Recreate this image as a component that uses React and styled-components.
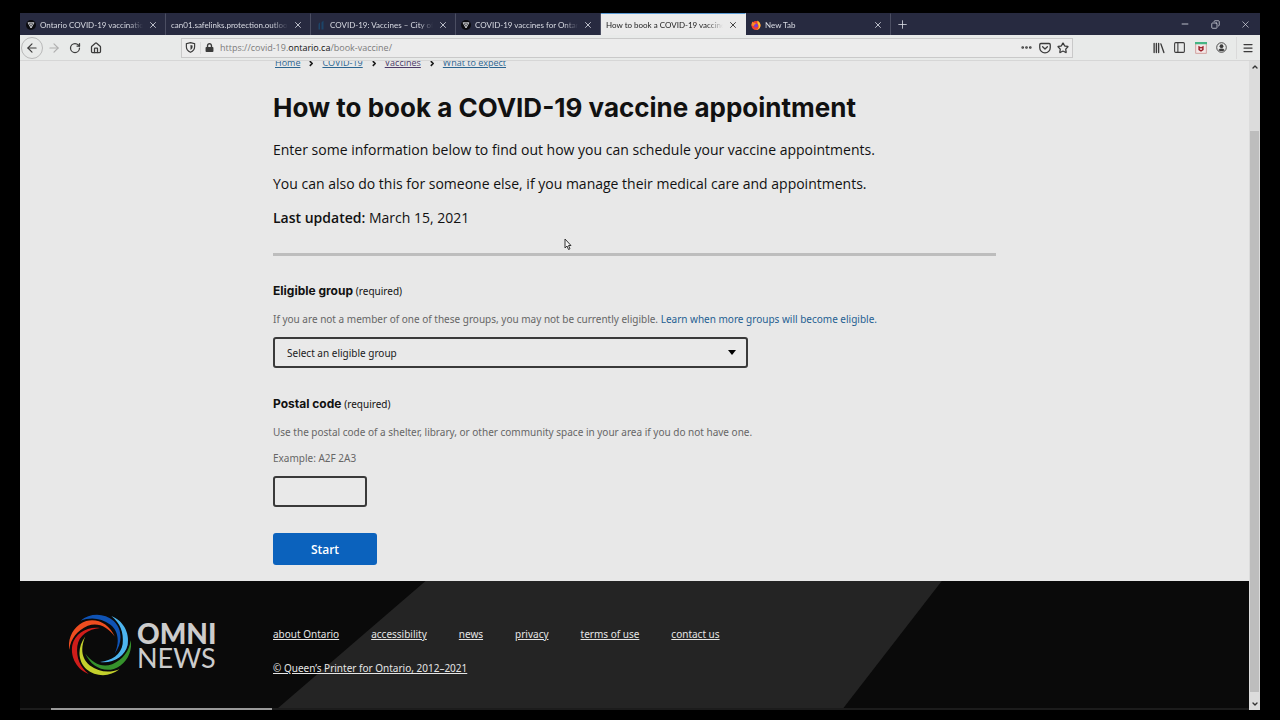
import React from 'react'
import styled, { createGlobalStyle, css } from 'styled-components'
import {
  ArrowLeft,
  ArrowRight,
  RotateCw,
  House,
  Ellipsis,
  Star,
  PanelLeft,
  Menu,
  Minus,
  Plus,
  X,
  Copy,
  ChevronUp,
  ChevronDown,
} from 'lucide-react'
import { FaLock } from 'react-icons/fa'

const tabs = [
  { title: 'Ontario COVID-19 vaccination', icon: 'trillium' },
  { title: 'can01.safelinks.protection.outlook.com' },
  { title: 'COVID-19: Vaccines – City of Toronto', icon: 'toronto' },
  { title: 'COVID-19 vaccines for Ontario', icon: 'trillium' },
  { title: 'How to book a COVID-19 vaccine appointment', active: true },
  { title: 'New Tab', icon: 'firefox' },
]

const crumbs = ['Home', 'COVID-19', 'Vaccines', 'What to expect']

const footerLinks = ['about Ontario', 'accessibility', 'news', 'privacy', 'terms of use', 'contact us']

const swirl = [
  { color: '#4db4ee', angle: 0 },
  { color: '#35912c', angle: 60 },
  { color: '#c3d02c', angle: 120 },
  { color: '#cf1d1a', angle: 180 },
  { color: '#ee4d20', angle: 240 },
  { color: '#0f53b5', angle: 300 },
]

const TabIcon = ({ name }) => {
  if (name === 'trillium') {
    return (
      <Favicon viewBox="0 0 20 20" aria-hidden="true">
        <circle cx="10" cy="10" r="10" fill="#0b0b0f" />
        <path d="M4 5.500h12L10 16z M7 5.500l3 4.500 3-4.500 M10 10v5" fill="none" stroke="#e4e6ea" strokeWidth="1.600" />
      </Favicon>
    )
  }
  if (name === 'toronto') {
    return (
      <Favicon viewBox="0 0 20 20" aria-hidden="true">
        <path d="M5 19V9q0-3 3-4v14z M11 19V5l4-4v18z" fill="#1d4468" />
      </Favicon>
    )
  }
  return (
    <Favicon viewBox="0 0 20 20" aria-hidden="true">
      <circle cx="10" cy="11" r="9" fill="#f2412f" />
      <path d="M13 1c4 3 6.500 6 6 11-1 5-5 8-9 8 5-1 6-5 5-9-1-3-3-5-2-10z" fill="#fdc22d" />
      <circle cx="10" cy="11" r="4" fill="#7b3fd4" />
      <path d="M1 11c0-4 1-6 2-8l2 3c2-1 4 0 5 2-3 0-4 2-4 4z" fill="#fb8a26" />
    </Favicon>
  )
}

const ShieldIcon = () => (
  <svg width="11" height="11" viewBox="0 0 16 16" fill="none" stroke="currentColor" strokeWidth="1.700" aria-hidden="true">
    <path d="M8 1L14 2.500V7c0 4-2.500 6.500-6 8-3.500-1.500-6-4-6-8V2.500z" />
    <path d="M8 4.500v7c2-1 3-2.500 3-5V5z" fill="currentColor" stroke="none" />
  </svg>
)

const PocketIcon = () => (
  <svg width="12" height="12" viewBox="0 0 16 16" fill="none" stroke="currentColor" strokeWidth="1.700" strokeLinecap="round" strokeLinejoin="round" aria-hidden="true">
    <path d="M2.500 2h11a1.500 1.500 0 0 1 1.500 1.500V7.500a7 7 0 0 1-14 0V3.500A1.500 1.500 0 0 1 2.500 2z" />
    <path d="M4.800 6.300L8 9.400l3.200-3.100" />
  </svg>
)

const LibraryIcon = () => (
  <svg width="12" height="12" viewBox="0 0 16 16" fill="none" stroke="currentColor" strokeWidth="1.800" strokeLinecap="round" aria-hidden="true">
    <path d="M1.500 2v12 M4.500 2v12 M7.500 2v12 M10.500 2.500l4 11.500" />
  </svg>
)

const ExtensionIcon = () => (
  <svg width="12" height="12" viewBox="0 0 16 16" aria-hidden="true">
    <rect x="1" y="1" width="14" height="14" fill="#f3e9e8" stroke="#c98a86" />
    <rect width="16" height="3" fill="#45b584" />
    <path d="M4.500 5l3.500 2 3.500-2v5.500L8 13l-3.500-2.500z" fill="#9c1e28" />
    <path d="M6.500 8l1.500 1 1.500-1v1.500l-1.500 1-1.500-1z" fill="#fff" />
  </svg>
)

const AccountIcon = () => (
  <svg width="11" height="11" viewBox="0 0 16 16" fill="none" stroke="currentColor" strokeWidth="1.300" aria-hidden="true">
    <circle cx="8" cy="8" r="7" />
    <circle cx="8" cy="6" r="2.800" fill="currentColor" stroke="none" />
    <path d="M3.500 11.500q1.500-2 4.500-2t4.500 2q-1.500 2-4.500 2t-4.500-2z" fill="currentColor" stroke="none" />
  </svg>
)

const BrowserTabs = () => (
  <TabStrip>
    {tabs.map((tab) => (
      <Tab key={tab.title} $active={tab.active}>
        {tab.icon && <TabIcon name={tab.icon} />}
        <TabTitle>{tab.title}</TabTitle>
        <TabClose aria-label={`Close ${tab.title}`}><X size={10} /></TabClose>
      </Tab>
    ))}
    <NewTab aria-label="New tab"><Plus size={13} strokeWidth={1.5} /></NewTab>
    <WindowControls>
      <WindowButton aria-label="Minimize"><Minus size={10} /></WindowButton>
      <WindowButton aria-label="Restore"><RestoreIcon size={9} /></WindowButton>
      <WindowButton aria-label="Close window"><X size={11} strokeWidth={1.5} /></WindowButton>
    </WindowControls>
  </TabStrip>
)

const Toolbar = () => (
  <Bar>
    <BackButton aria-label="Back"><ArrowLeft size={14} /></BackButton>
    <ToolButton aria-label="Forward" $faded><ArrowRight size={14} /></ToolButton>
    <ToolButton aria-label="Reload"><RotateCw size={12} strokeWidth={2.5} /></ToolButton>
    <ToolButton aria-label="Home"><House size={12} strokeWidth={2.5} /></ToolButton>
    <AddressBar>
      <SiteInfo>
        <ShieldIcon />
        <Divider />
        <FaLock size={9} />
      </SiteInfo>
      <Address>https://covid-19.<b>ontario.ca</b>/book-vaccine/</Address>
      <Ellipsis size={13} strokeWidth={3} />
      <PocketIcon />
      <Star size={12} strokeWidth={2.5} />
    </AddressBar>
    <ToolButton aria-label="Library"><LibraryIcon /></ToolButton>
    <ToolButton aria-label="Sidebars"><PanelLeft size={13} /></ToolButton>
    <ToolButton aria-label="Extension"><ExtensionIcon /></ToolButton>
    <ToolButton aria-label="Account"><AccountIcon /></ToolButton>
    <MenuButton aria-label="Menu"><Menu size={12} strokeWidth={2.5} /></MenuButton>
  </Bar>
)

const BookingForm = () => (
  <Form onSubmit={(e) => e.preventDefault()}>
    <Field>
      <Label htmlFor="group">Eligible group <Required>(required)</Required></Label>
      <Hint>
        If you are not a member of one of these groups, you may not be currently eligible.{' '}
        <HintLink href="#eligible">Learn when more groups will become eligible.</HintLink>
      </Hint>
      <SelectWrap>
        <Select id="group" defaultValue="">
          <option value="">Select an eligible group</option>
        </Select>
        <Caret viewBox="0 0 8 5" aria-hidden="true"><path d="M0 0h8L4 5z" /></Caret>
      </SelectWrap>
    </Field>
    <Field>
      <Label htmlFor="postal">Postal code <Required>(required)</Required></Label>
      <Hint>Use the postal code of a shelter, library, or other community space in your area if you do not have one.</Hint>
      <Hint>Example: A2F 2A3</Hint>
      <PostalInput id="postal" type="text" />
    </Field>
    <StartButton type="submit">Start</StartButton>
  </Form>
)

const OmniLogo = () => (
  <Bug>
    <svg width="62" height="62" viewBox="-93 -93 186 186" aria-hidden="true">
      {swirl.map(({ color, angle }) => (
        <path
          key={color}
          transform={`rotate(${angle})`}
          fill={color}
          d="M34-87C68-74 90-38 83 0C75 34 40 56 0 51C36 47 63 29 68-3C72-38 60-66 34-87Z"
        />
      ))}
    </svg>
    <BugText>
      <BugTop>OMNI</BugTop>
      <BugBottom>NEWS</BugBottom>
    </BugText>
  </Bug>
)

const App = () => {
  return (
    <Screen>
      <GlobalStyle />
      <BrowserTabs />
      <Toolbar />
      <Viewport>
        <Page>
          <Main>
            <Crumbs aria-label="Breadcrumb">
              {crumbs.map((crumb, i) => (
                <React.Fragment key={crumb}>
                  {i > 0 && <CrumbArrow viewBox="0 0 5 8" aria-hidden="true"><path d="M1 1l3 3-3 3" /></CrumbArrow>}
                  <Crumb href="#crumb" $visited={crumb === 'Vaccines'}>{crumb}</Crumb>
                </React.Fragment>
              ))}
            </Crumbs>
            <Title>How to book a COVID-19 vaccine appointment</Title>
            <Intro>
              <p>Enter some information below to find out how you can schedule your vaccine appointments.</p>
              <p>You can also do this for someone else, if you manage their medical care and appointments.</p>
              <p><strong>Last updated:</strong> March 15, 2021</p>
            </Intro>
            <Rule />
            <BookingForm />
          </Main>
          <Footer>
            <FooterInner>
              <FooterNav>
                {footerLinks.map((link) => (
                  <FooterLink key={link} href="#footer">{link}</FooterLink>
                ))}
              </FooterNav>
              <FooterLink href="#copyright">© Queen’s Printer for Ontario, 2012–2021</FooterLink>
            </FooterInner>
          </Footer>
          <OmniLogo />
          <Pointer viewBox="0 0 8 13" aria-hidden="true">
            <path d="M1 1v9l2-2 1.500 3.500 1.500-.7L4.500 7.500H7z" />
          </Pointer>
        </Page>
        <Scrollbar>
          <ChevronUp size={8} strokeWidth={4} />
          <Thumb />
          <ChevronDown size={8} strokeWidth={4} />
        </Scrollbar>
      </Viewport>
    </Screen>
  )
}

export default App

const GlobalStyle = createGlobalStyle`
  * {
    box-sizing: border-box;
  }

  body {
    margin: 0;
    background: #000;
    color: #111;
    font-family: "Noto Sans", "Open Sans", sans-serif;
  }

  button, input, select {
    font-family: inherit;
    margin: 0;
  }

  p {
    margin: 0;
  }
`;

const Screen = styled.div`
  display: flex;
  flex-direction: column;
  min-height: 100vh;
  padding: 13px 20px 10px;
`;

const TabStrip = styled.div`
  display: flex;
  height: 22px;
  padding-left: 1px;
  background: #272a40;
  color: #d9dbe3;
`;

const Tab = styled.div`
  flex: 0 1 145px;
  min-width: 0;
  display: flex;
  align-items: center;
  gap: 4px;
  padding: 0 6px 0 5px;
  border-top: 1px solid transparent;
  border-right: 1px solid #4b4e62;
  font-size: 8px;

  ${({ $active }) => $active && css`
    background: #ebebeb;
    color: #222;
    border-top-color: #5b9bd5;
    border-right-color: #ebebeb;
  `}
`;

const Favicon = styled.svg`
  flex: none;
  width: 10px;
  height: 10px;
`;

const TabTitle = styled.span`
  flex: 1;
  overflow: hidden;
  white-space: nowrap;
  font-family: Lato, "Noto Sans", sans-serif;
  mask-image: linear-gradient(to right, #000 86%, transparent);
`;

const bareButton = css`
  display: flex;
  align-items: center;
  justify-content: center;
  padding: 0;
  border: 0;
  background: none;
  color: inherit;
  cursor: pointer;
`;

const TabClose = styled.button`
  ${bareButton}
  flex: none;
  width: 12px;
`;

const NewTab = styled.button`
  ${bareButton}
  width: 22px;
`;

const WindowControls = styled.div`
  display: flex;
  margin-left: auto;
`;

const WindowButton = styled.button`
  ${bareButton}
  width: 30px;
`;

const RestoreIcon = styled(Copy)`
  transform: scaleX(-1);
`;

const Bar = styled.div`
  display: flex;
  align-items: center;
  height: 26px;
  padding: 0 2px 0 1px;
  background: #e8eae9;
  border-bottom: 1px solid #d6d6d6;
  color: #3b3b3b;
`;

const ToolButton = styled.button`
  ${bareButton}
  width: 21px;
  height: 22px;
  color: ${({ $faded }) => ($faded ? '#b0b0b0' : '#3b3b3b')};
`;

const BackButton = styled(ToolButton)`
  width: 22px;
  border: 1px solid #b9b9b9;
  border-radius: 50%;
`;

const MenuButton = styled(ToolButton)`
  margin-left: 4px;
  width: 22px;
  border-left: 1px solid #dadada;
`;

const AddressBar = styled.div`
  flex: 1;
  display: flex;
  align-items: center;
  gap: 6px;
  height: 20px;
  margin: 0 75px;
  padding: 0 3px;
  border: 1px solid #c9c9c9;
  background: #ececec;
`;

const SiteInfo = styled.span`
  display: flex;
  align-items: center;
  gap: 4px;
`;

const Divider = styled.span`
  width: 1px;
  height: 12px;
  background: #dadada;
`;

const Address = styled.span`
  flex: 1;
  font-family: "Open Sans", "Noto Sans", sans-serif;
  font-size: 9px;
  color: #7c7c7c;

  b {
    font-weight: 400;
    color: #111;
  }
`;

const Viewport = styled.div`
  flex: 1;
  display: flex;
`;

const Page = styled.div`
  flex: 1;
  position: relative;
  display: flex;
  flex-direction: column;
  background: #e8e8e8;
`;

const Main = styled.main`
  width: 100%;
  max-width: 723px;
  margin: 0 auto;
  padding-bottom: 16px;
`;

const Crumbs = styled.nav`
  display: flex;
  align-items: flex-end;
  gap: 9px;
  height: 8px;
  padding-left: 2px;
  overflow: hidden;
  font-family: "Open Sans", "Noto Sans", sans-serif;
  font-size: 9px;
  line-height: 12px;
`;

const Crumb = styled.a`
  color: ${({ $visited }) => ($visited ? '#4c3a68' : '#2c6590')};
`;

const CrumbArrow = styled.svg`
  width: 4px;
  height: 7px;
  margin-bottom: 2px;
  fill: none;
  stroke: #1a1a1a;
  stroke-width: 2;
`;

const Title = styled.h1`
  margin: 23px 0 14px;
  font-family: Inter, "Open Sans", sans-serif;
  font-size: 26px;
  line-height: 32px;
  font-weight: 700;
`;

const Intro = styled.div`
  display: flex;
  flex-direction: column;
  gap: 10px;
  font-family: "Open Sans", "Noto Sans", sans-serif;
  font-size: 14px;
  line-height: 24px;

  strong {
    font-weight: 600;
  }
`;

const Rule = styled.hr`
  height: 3px;
  margin: 23px 0 25px;
  border: 0;
  background: #bdbdbd;
`;

const Form = styled.form`
  display: flex;
  flex-direction: column;
  align-items: flex-start;
  gap: 26px;
`;

const Field = styled.div`
  display: flex;
  flex-direction: column;
  align-items: flex-start;
  gap: 10px;
  width: 100%;
`;

const Label = styled.label`
  font-family: Inter, "Open Sans", sans-serif;
  font-size: 12px;
  line-height: 20px;
  font-weight: 700;
`;

const Required = styled.span`
  font-family: "Noto Sans", "Open Sans", sans-serif;
  font-size: 10px;
  line-height: 1;
  font-weight: 400;
`;

const Hint = styled.p`
  font-size: 10px;
  line-height: 16px;
  color: #666;
`;

const HintLink = styled.a`
  color: #1f5f92;
  text-decoration: none;
`;

const SelectWrap = styled.div`
  position: relative;
  width: 100%;
  max-width: 475px;
`;

const control = css`
  height: 31px;
  border: 2px solid #3a3a3a;
  border-radius: 3px;
  background: #e9e9e9;
  color: #1a1a1a;
  font-size: 10px;
`;

const Select = styled.select`
  ${control}
  display: block;
  width: 100%;
  padding: 0 12px;
  appearance: none;
`;

const Caret = styled.svg`
  position: absolute;
  top: 13px;
  right: 12px;
  width: 8px;
  height: 5px;
  pointer-events: none;
`;

const PostalInput = styled.input`
  ${control}
  width: 94px;
  padding: 0 8px;
`;

const StartButton = styled.button`
  width: 104px;
  height: 32px;
  border: 0;
  border-radius: 3px;
  background: #0b62bd;
  color: #fff;
  font-family: "Open Sans", "Noto Sans", sans-serif;
  font-size: 12px;
  font-weight: 600;
  cursor: pointer;
`;

const Footer = styled.footer`
  flex: 1;
  position: relative;
  background: #0a0a0a;
  border-bottom: 2px solid #1c1c1c;

  &::before {
    content: '';
    position: absolute;
    inset: 0;
    background: #242424;
    clip-path: polygon(33% 0, 75% 0, 67% 100%, 21% 100%);
  }

  &::after {
    content: '';
    position: absolute;
    left: 31px;
    top: 100%;
    width: 18%;
    height: 2px;
    background: #9a9a9a;
  }
`;

const FooterInner = styled.div`
  position: relative;
  display: flex;
  flex-direction: column;
  align-items: flex-start;
  gap: 18px;
  width: 100%;
  max-width: 723px;
  margin: 0 auto;
  padding: 45px 0 32px;
`;

const FooterNav = styled.nav`
  display: flex;
  gap: 32px;
`;

const FooterLink = styled.a`
  font-size: 10px;
  line-height: 16px;
  color: #e6e6e6;
`;

const Bug = styled.div`
  position: absolute;
  left: 49px;
  bottom: 34px;
  display: flex;
  align-items: center;
  gap: 6px;
  color: #ccc;
`;

const BugText = styled.div`
  display: flex;
  flex-direction: column;
  font-family: Lato, sans-serif;
`;

const BugTop = styled.span`
  font-size: 28px;
  line-height: 26px;
  font-weight: 900;
`;

const BugBottom = styled.span`
  font-size: 27px;
  line-height: 24px;
  font-weight: 400;
`;

const Pointer = styled.svg`
  position: absolute;
  top: 177px;
  left: 544px;
  width: 8px;
  height: 13px;
  fill: #f4f4f4;
  stroke: #333;
  stroke-width: 1;
`;

const Scrollbar = styled.div`
  flex: none;
  display: flex;
  flex-direction: column;
  align-items: center;
  width: 11px;
  padding: 2px 0 2px;
  background: #dcdcdc;
  color: #333;
`;

const Thumb = styled.div`
  flex: 1;
  width: 9px;
  margin: 60px 0 8px;
  background: #bdbdbd;
`;
